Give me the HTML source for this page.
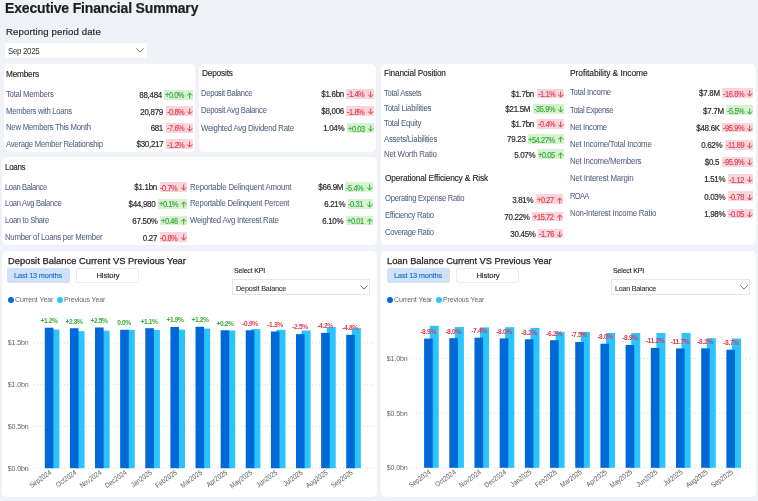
<!DOCTYPE html><html><head><meta charset="utf-8"><style>
html,body{margin:0;padding:0;}
body{width:758px;height:501px;background:#EFF3F8;position:relative;overflow:hidden;font-family:"Liberation Sans", sans-serif;}
.t{position:absolute;white-space:nowrap;}
.r{position:absolute;}
</style></head><body><div style="position:absolute;left:0;top:0;width:758px;height:501px;filter:blur(0.3px)">
<div class="t" style="left:4.60px;top:1.00px;font-size:14.3px;line-height:14.3px;color:#1E1E1E;font-weight:bold;letter-spacing:-0.163px;-webkit-text-stroke:0.2px #1E1E1E;transform:scaleX(0.9790);transform-origin:0 0;">Executive Financial Summary</div>
<div class="t" style="left:6.00px;top:26.94px;font-size:9.4px;line-height:9.4px;color:#2B2B2B;letter-spacing:0.113px;-webkit-text-stroke:0.2px #2B2B2B;transform:scaleX(1.0251);transform-origin:0 0;">Reporting period date</div>
<div class="r" style="left:5.00px;top:42.50px;width:142.00px;height:15.20px;background:#fff;"></div>
<div class="t" style="left:7.70px;top:47.29px;font-size:8.4px;line-height:8.4px;color:#333;letter-spacing:-0.314px;transform:scaleX(0.9388);transform-origin:0 0;">Sep 2025</div>
<svg class="r" style="left:135.8px;top:48.3px" width="8" height="4.6" viewBox="0 0 8 4.6"><path d="M0.4 0.4L4 4.1L7.6 0.4" fill="none" stroke="#555" stroke-width="0.85"/></svg>
<div class="r" style="left:4.00px;top:64.00px;width:191.00px;height:88.00px;background:#fff;border-radius:5px;"></div>
<div class="r" style="left:199.00px;top:64.00px;width:177.00px;height:88.00px;background:#fff;border-radius:5px;"></div>
<div class="r" style="left:2.00px;top:157.00px;width:375.00px;height:87.50px;background:#fff;border-radius:5px;"></div>
<div class="r" style="left:381.00px;top:64.00px;width:375.00px;height:180.50px;background:#fff;border-radius:5px;"></div>
<div class="r" style="left:2.00px;top:251.00px;width:375.00px;height:245.50px;background:#fff;border-radius:5px;"></div>
<div class="r" style="left:381.00px;top:251.00px;width:375.00px;height:245.50px;background:#fff;border-radius:5px;"></div>
<div class="t" style="left:6.00px;top:70.02px;font-size:8.6px;line-height:8.6px;color:#252423;letter-spacing:-0.224px;-webkit-text-stroke:0.14px #252423;transform:scaleX(0.9625);transform-origin:0 0;">Members</div>
<div class="t" style="left:5.80px;top:90.17px;font-size:8.3px;line-height:8.3px;color:#55647F;letter-spacing:-0.285px;-webkit-text-stroke:0.05px #55647F;transform:scaleX(0.9371);transform-origin:0 0;">Total Members</div>
<div class="r" style="left:164.31px;top:89.80px;width:28.89px;height:9.90px;background:#D7F1D3;"></div>
<div class="t" style="left:164.91px;top:92.26px;font-size:8.2px;line-height:8.2px;color:#36A936;letter-spacing:-0.522px;-webkit-text-stroke:0.15px #36A936;transform:scaleX(0.9110);transform-origin:0 0;">+0.0%</div>
<svg class="r" style="left:187px;top:92px" width="6" height="7" viewBox="0 0 6 7"><path d="M2.7 6.5V0.9M0.1 3.6L2.7 0.9L5.3 3.6" fill="none" stroke="#36A936" stroke-width="1.0" stroke-linecap="butt" stroke-linejoin="miter"/></svg>
<div class="t" style="right:596.24px;text-align:right;top:91.09px;font-size:8.4px;line-height:8.4px;color:#2B2B2B;letter-spacing:-0.264px;-webkit-text-stroke:0.2px #2B2B2B;transform:scaleX(0.9487);transform-origin:100% 0;">88,484</div>
<div class="t" style="left:5.80px;top:106.62px;font-size:8.3px;line-height:8.3px;color:#55647F;letter-spacing:-0.316px;-webkit-text-stroke:0.05px #55647F;transform:scaleX(0.9298);transform-origin:0 0;">Members with Loans</div>
<div class="r" style="left:166.02px;top:106.25px;width:27.18px;height:9.90px;background:#F9D6DB;"></div>
<div class="t" style="left:166.62px;top:108.71px;font-size:8.2px;line-height:8.2px;color:#E23A4E;letter-spacing:-0.476px;-webkit-text-stroke:0.15px #E23A4E;transform:scaleX(0.9110);transform-origin:0 0;">-0.8%</div>
<svg class="r" style="left:187px;top:108px" width="6" height="7" viewBox="0 0 6 7"><path d="M2.7 0.5V6.1M0.1 3.4L2.7 6.1L5.3 3.4" fill="none" stroke="#E23A4E" stroke-width="1.0" stroke-linecap="butt" stroke-linejoin="miter"/></svg>
<div class="t" style="right:594.53px;text-align:right;top:107.54px;font-size:8.4px;line-height:8.4px;color:#2B2B2B;letter-spacing:-0.264px;-webkit-text-stroke:0.2px #2B2B2B;transform:scaleX(0.9487);transform-origin:100% 0;">20,879</div>
<div class="t" style="left:5.80px;top:123.07px;font-size:8.3px;line-height:8.3px;color:#55647F;letter-spacing:-0.283px;-webkit-text-stroke:0.05px #55647F;transform:scaleX(0.9386);transform-origin:0 0;">New Members This Month</div>
<div class="r" style="left:166.02px;top:122.70px;width:27.18px;height:9.90px;background:#F9D6DB;"></div>
<div class="t" style="left:166.62px;top:125.16px;font-size:8.2px;line-height:8.2px;color:#E23A4E;letter-spacing:-0.476px;-webkit-text-stroke:0.15px #E23A4E;transform:scaleX(0.9110);transform-origin:0 0;">-7.6%</div>
<svg class="r" style="left:187px;top:125px" width="6" height="7" viewBox="0 0 6 7"><path d="M2.7 0.5V6.1M0.1 3.4L2.7 6.1L5.3 3.4" fill="none" stroke="#E23A4E" stroke-width="1.0" stroke-linecap="butt" stroke-linejoin="miter"/></svg>
<div class="t" style="right:594.62px;text-align:right;top:123.99px;font-size:8.4px;line-height:8.4px;color:#2B2B2B;letter-spacing:-0.360px;-webkit-text-stroke:0.2px #2B2B2B;transform:scaleX(0.9487);transform-origin:100% 0;">681</div>
<div class="t" style="left:5.80px;top:139.52px;font-size:8.3px;line-height:8.3px;color:#55647F;letter-spacing:-0.286px;-webkit-text-stroke:0.05px #55647F;transform:scaleX(0.9332);transform-origin:0 0;">Average Member Relationship</div>
<div class="r" style="left:166.02px;top:139.15px;width:27.18px;height:9.90px;background:#F9D6DB;"></div>
<div class="t" style="left:166.62px;top:141.61px;font-size:8.2px;line-height:8.2px;color:#E23A4E;letter-spacing:-0.476px;-webkit-text-stroke:0.15px #E23A4E;transform:scaleX(0.9110);transform-origin:0 0;">-1.2%</div>
<svg class="r" style="left:187px;top:141px" width="6" height="7" viewBox="0 0 6 7"><path d="M2.7 0.5V6.1M0.1 3.4L2.7 6.1L5.3 3.4" fill="none" stroke="#E23A4E" stroke-width="1.0" stroke-linecap="butt" stroke-linejoin="miter"/></svg>
<div class="t" style="right:594.53px;text-align:right;top:140.44px;font-size:8.4px;line-height:8.4px;color:#2B2B2B;letter-spacing:-0.260px;-webkit-text-stroke:0.2px #2B2B2B;transform:scaleX(0.9487);transform-origin:100% 0;">$30,217</div>
<div class="t" style="left:201.50px;top:69.42px;font-size:8.6px;line-height:8.6px;color:#252423;letter-spacing:-0.186px;-webkit-text-stroke:0.14px #252423;transform:scaleX(0.9610);transform-origin:0 0;">Deposits</div>
<div class="t" style="left:201.30px;top:89.37px;font-size:8.3px;line-height:8.3px;color:#55647F;letter-spacing:-0.332px;-webkit-text-stroke:0.05px #55647F;transform:scaleX(0.9231);transform-origin:0 0;">Deposit Balance</div>
<div class="r" style="left:346.42px;top:89.00px;width:27.18px;height:9.90px;background:#F9D6DB;"></div>
<div class="t" style="left:347.02px;top:91.46px;font-size:8.2px;line-height:8.2px;color:#E23A4E;letter-spacing:-0.476px;-webkit-text-stroke:0.15px #E23A4E;transform:scaleX(0.9110);transform-origin:0 0;">-1.4%</div>
<svg class="r" style="left:368px;top:91px" width="6" height="7" viewBox="0 0 6 7"><path d="M2.7 0.5V6.1M0.1 3.4L2.7 6.1L5.3 3.4" fill="none" stroke="#E23A4E" stroke-width="1.0" stroke-linecap="butt" stroke-linejoin="miter"/></svg>
<div class="t" style="right:414.13px;text-align:right;top:90.29px;font-size:8.4px;line-height:8.4px;color:#2B2B2B;letter-spacing:-0.264px;-webkit-text-stroke:0.2px #2B2B2B;transform:scaleX(0.9487);transform-origin:100% 0;">$1.6bn</div>
<div class="t" style="left:201.30px;top:106.47px;font-size:8.3px;line-height:8.3px;color:#55647F;letter-spacing:-0.301px;-webkit-text-stroke:0.05px #55647F;transform:scaleX(0.9292);transform-origin:0 0;">Deposit Avg Balance</div>
<div class="r" style="left:346.42px;top:106.10px;width:27.18px;height:9.90px;background:#F9D6DB;"></div>
<div class="t" style="left:347.02px;top:108.56px;font-size:8.2px;line-height:8.2px;color:#E23A4E;letter-spacing:-0.476px;-webkit-text-stroke:0.15px #E23A4E;transform:scaleX(0.9110);transform-origin:0 0;">-1.8%</div>
<svg class="r" style="left:368px;top:108px" width="6" height="7" viewBox="0 0 6 7"><path d="M2.7 0.5V6.1M0.1 3.4L2.7 6.1L5.3 3.4" fill="none" stroke="#E23A4E" stroke-width="1.0" stroke-linecap="butt" stroke-linejoin="miter"/></svg>
<div class="t" style="right:414.13px;text-align:right;top:107.39px;font-size:8.4px;line-height:8.4px;color:#2B2B2B;letter-spacing:-0.264px;-webkit-text-stroke:0.2px #2B2B2B;transform:scaleX(0.9487);transform-origin:100% 0;">$8,006</div>
<div class="t" style="left:201.30px;top:123.57px;font-size:8.3px;line-height:8.3px;color:#55647F;letter-spacing:-0.253px;-webkit-text-stroke:0.05px #55647F;transform:scaleX(0.9400);transform-origin:0 0;">Weighted Avg Dividend Rate</div>
<div class="r" style="left:346.98px;top:123.20px;width:26.62px;height:9.90px;background:#D7F1D3;"></div>
<div class="t" style="left:347.58px;top:125.66px;font-size:8.2px;line-height:8.2px;color:#36A936;letter-spacing:-0.461px;-webkit-text-stroke:0.15px #36A936;transform:scaleX(0.9110);transform-origin:0 0;">+0.03</div>
<svg class="r" style="left:368px;top:125px" width="6" height="7" viewBox="0 0 6 7"><path d="M2.7 0.5V6.1M0.1 3.4L2.7 6.1L5.3 3.4" fill="none" stroke="#36A936" stroke-width="1.0" stroke-linecap="butt" stroke-linejoin="miter"/></svg>
<div class="t" style="right:413.61px;text-align:right;top:124.49px;font-size:8.4px;line-height:8.4px;color:#2B2B2B;letter-spacing:-0.306px;-webkit-text-stroke:0.2px #2B2B2B;transform:scaleX(0.9487);transform-origin:100% 0;">1.04%</div>
<div class="t" style="left:5.00px;top:163.42px;font-size:8.6px;line-height:8.6px;color:#252423;letter-spacing:-0.365px;-webkit-text-stroke:0.14px #252423;transform:scaleX(0.9376);transform-origin:0 0;">Loans</div>
<div class="t" style="left:5.00px;top:182.57px;font-size:8.3px;line-height:8.3px;color:#55647F;letter-spacing:-0.407px;-webkit-text-stroke:0.05px #55647F;transform:scaleX(0.9117);transform-origin:0 0;">Loan Balance</div>
<div class="r" style="left:159.62px;top:182.20px;width:27.18px;height:9.90px;background:#F9D6DB;"></div>
<div class="t" style="left:160.22px;top:184.66px;font-size:8.2px;line-height:8.2px;color:#E23A4E;letter-spacing:-0.476px;-webkit-text-stroke:0.15px #E23A4E;transform:scaleX(0.9110);transform-origin:0 0;">-0.7%</div>
<svg class="r" style="left:181px;top:184px" width="6" height="7" viewBox="0 0 6 7"><path d="M2.7 0.5V6.1M0.1 3.4L2.7 6.1L5.3 3.4" fill="none" stroke="#E23A4E" stroke-width="1.0" stroke-linecap="butt" stroke-linejoin="miter"/></svg>
<div class="t" style="right:600.93px;text-align:right;top:183.49px;font-size:8.4px;line-height:8.4px;color:#2B2B2B;letter-spacing:-0.264px;-webkit-text-stroke:0.2px #2B2B2B;transform:scaleX(0.9487);transform-origin:100% 0;">$1.1bn</div>
<div class="t" style="left:5.00px;top:199.27px;font-size:8.3px;line-height:8.3px;color:#55647F;letter-spacing:-0.349px;-webkit-text-stroke:0.05px #55647F;transform:scaleX(0.9215);transform-origin:0 0;">Loan Avg Balance</div>
<div class="r" style="left:157.91px;top:198.90px;width:28.89px;height:9.90px;background:#D7F1D3;"></div>
<div class="t" style="left:158.51px;top:201.36px;font-size:8.2px;line-height:8.2px;color:#36A936;letter-spacing:-0.522px;-webkit-text-stroke:0.15px #36A936;transform:scaleX(0.9110);transform-origin:0 0;">+0.1%</div>
<svg class="r" style="left:181px;top:201px" width="6" height="7" viewBox="0 0 6 7"><path d="M2.7 6.5V0.9M0.1 3.6L2.7 0.9L5.3 3.6" fill="none" stroke="#36A936" stroke-width="1.0" stroke-linecap="butt" stroke-linejoin="miter"/></svg>
<div class="t" style="right:602.63px;text-align:right;top:200.19px;font-size:8.4px;line-height:8.4px;color:#2B2B2B;letter-spacing:-0.260px;-webkit-text-stroke:0.2px #2B2B2B;transform:scaleX(0.9487);transform-origin:100% 0;">$44,980</div>
<div class="t" style="left:5.00px;top:215.97px;font-size:8.3px;line-height:8.3px;color:#55647F;letter-spacing:-0.340px;-webkit-text-stroke:0.05px #55647F;transform:scaleX(0.9217);transform-origin:0 0;">Loan to Share</div>
<div class="r" style="left:160.18px;top:215.60px;width:26.62px;height:9.90px;background:#D7F1D3;"></div>
<div class="t" style="left:160.78px;top:218.06px;font-size:8.2px;line-height:8.2px;color:#36A936;letter-spacing:-0.461px;-webkit-text-stroke:0.15px #36A936;transform:scaleX(0.9110);transform-origin:0 0;">+0.46</div>
<svg class="r" style="left:181px;top:218px" width="6" height="7" viewBox="0 0 6 7"><path d="M2.7 6.5V0.9M0.1 3.6L2.7 0.9L5.3 3.6" fill="none" stroke="#36A936" stroke-width="1.0" stroke-linecap="butt" stroke-linejoin="miter"/></svg>
<div class="t" style="right:600.40px;text-align:right;top:216.89px;font-size:8.4px;line-height:8.4px;color:#2B2B2B;letter-spacing:-0.292px;-webkit-text-stroke:0.2px #2B2B2B;transform:scaleX(0.9487);transform-origin:100% 0;">67.50%</div>
<div class="t" style="left:5.00px;top:232.67px;font-size:8.3px;line-height:8.3px;color:#55647F;letter-spacing:-0.271px;-webkit-text-stroke:0.05px #55647F;transform:scaleX(0.9389);transform-origin:0 0;">Number of Loans per Member</div>
<div class="r" style="left:159.62px;top:232.30px;width:27.18px;height:9.90px;background:#F9D6DB;"></div>
<div class="t" style="left:160.22px;top:234.76px;font-size:8.2px;line-height:8.2px;color:#E23A4E;letter-spacing:-0.476px;-webkit-text-stroke:0.15px #E23A4E;transform:scaleX(0.9110);transform-origin:0 0;">-0.8%</div>
<svg class="r" style="left:181px;top:234px" width="6" height="7" viewBox="0 0 6 7"><path d="M2.7 0.5V6.1M0.1 3.4L2.7 6.1L5.3 3.4" fill="none" stroke="#E23A4E" stroke-width="1.0" stroke-linecap="butt" stroke-linejoin="miter"/></svg>
<div class="t" style="right:600.94px;text-align:right;top:233.59px;font-size:8.4px;line-height:8.4px;color:#2B2B2B;letter-spacing:-0.280px;-webkit-text-stroke:0.2px #2B2B2B;transform:scaleX(0.9487);transform-origin:100% 0;">0.27</div>
<div class="t" style="left:190.00px;top:182.57px;font-size:8.3px;line-height:8.3px;color:#55647F;letter-spacing:-0.218px;-webkit-text-stroke:0.05px #55647F;transform:scaleX(0.9480);transform-origin:0 0;">Reportable Delinquent Amount</div>
<div class="r" style="left:345.42px;top:182.20px;width:27.18px;height:9.90px;background:#D7F1D3;"></div>
<div class="t" style="left:346.02px;top:184.66px;font-size:8.2px;line-height:8.2px;color:#36A936;letter-spacing:-0.476px;-webkit-text-stroke:0.15px #36A936;transform:scaleX(0.9110);transform-origin:0 0;">-5.4%</div>
<svg class="r" style="left:367px;top:184px" width="6" height="7" viewBox="0 0 6 7"><path d="M2.7 0.5V6.1M0.1 3.4L2.7 6.1L5.3 3.4" fill="none" stroke="#36A936" stroke-width="1.0" stroke-linecap="butt" stroke-linejoin="miter"/></svg>
<div class="t" style="right:415.15px;text-align:right;top:183.49px;font-size:8.4px;line-height:8.4px;color:#2B2B2B;letter-spacing:-0.288px;-webkit-text-stroke:0.2px #2B2B2B;transform:scaleX(0.9487);transform-origin:100% 0;">$66.9M</div>
<div class="t" style="left:190.00px;top:199.27px;font-size:8.3px;line-height:8.3px;color:#55647F;letter-spacing:-0.258px;-webkit-text-stroke:0.05px #55647F;transform:scaleX(0.9363);transform-origin:0 0;">Reportable Delinquent Percent</div>
<div class="r" style="left:347.69px;top:198.90px;width:24.91px;height:9.90px;background:#D7F1D3;"></div>
<div class="t" style="left:348.29px;top:201.36px;font-size:8.2px;line-height:8.2px;color:#36A936;letter-spacing:-0.416px;-webkit-text-stroke:0.15px #36A936;transform:scaleX(0.9110);transform-origin:0 0;">-0.31</div>
<svg class="r" style="left:367px;top:201px" width="6" height="7" viewBox="0 0 6 7"><path d="M2.7 0.5V6.1M0.1 3.4L2.7 6.1L5.3 3.4" fill="none" stroke="#36A936" stroke-width="1.0" stroke-linecap="butt" stroke-linejoin="miter"/></svg>
<div class="t" style="right:412.90px;text-align:right;top:200.19px;font-size:8.4px;line-height:8.4px;color:#2B2B2B;letter-spacing:-0.306px;-webkit-text-stroke:0.2px #2B2B2B;transform:scaleX(0.9487);transform-origin:100% 0;">6.21%</div>
<div class="t" style="left:190.00px;top:215.97px;font-size:8.3px;line-height:8.3px;color:#55647F;letter-spacing:-0.244px;-webkit-text-stroke:0.05px #55647F;transform:scaleX(0.9394);transform-origin:0 0;">Weighted Avg Interest Rate</div>
<div class="r" style="left:345.98px;top:215.60px;width:26.62px;height:9.90px;background:#D7F1D3;"></div>
<div class="t" style="left:346.58px;top:218.06px;font-size:8.2px;line-height:8.2px;color:#36A936;letter-spacing:-0.461px;-webkit-text-stroke:0.15px #36A936;transform:scaleX(0.9110);transform-origin:0 0;">+0.01</div>
<svg class="r" style="left:367px;top:218px" width="6" height="7" viewBox="0 0 6 7"><path d="M2.7 6.5V0.9M0.1 3.6L2.7 0.9L5.3 3.6" fill="none" stroke="#36A936" stroke-width="1.0" stroke-linecap="butt" stroke-linejoin="miter"/></svg>
<div class="t" style="right:414.61px;text-align:right;top:216.89px;font-size:8.4px;line-height:8.4px;color:#2B2B2B;letter-spacing:-0.306px;-webkit-text-stroke:0.2px #2B2B2B;transform:scaleX(0.9487);transform-origin:100% 0;">6.10%</div>
<div class="t" style="left:384.20px;top:69.42px;font-size:8.6px;line-height:8.6px;color:#252423;letter-spacing:-0.162px;-webkit-text-stroke:0.14px #252423;transform:scaleX(0.9591);transform-origin:0 0;">Financial Position</div>
<div class="t" style="left:384.20px;top:88.97px;font-size:8.3px;line-height:8.3px;color:#55647F;letter-spacing:-0.312px;-webkit-text-stroke:0.05px #55647F;transform:scaleX(0.9226);transform-origin:0 0;">Total Assets</div>
<div class="r" style="left:537.02px;top:88.60px;width:27.18px;height:9.90px;background:#F9D6DB;"></div>
<div class="t" style="left:537.62px;top:91.06px;font-size:8.2px;line-height:8.2px;color:#E23A4E;letter-spacing:-0.476px;-webkit-text-stroke:0.15px #E23A4E;transform:scaleX(0.9110);transform-origin:0 0;">-1.1%</div>
<svg class="r" style="left:558px;top:91px" width="6" height="7" viewBox="0 0 6 7"><path d="M2.7 0.5V6.1M0.1 3.4L2.7 6.1L5.3 3.4" fill="none" stroke="#E23A4E" stroke-width="1.0" stroke-linecap="butt" stroke-linejoin="miter"/></svg>
<div class="t" style="right:223.53px;text-align:right;top:89.89px;font-size:8.4px;line-height:8.4px;color:#2B2B2B;letter-spacing:-0.264px;-webkit-text-stroke:0.2px #2B2B2B;transform:scaleX(0.9487);transform-origin:100% 0;">$1.7bn</div>
<div class="t" style="left:384.20px;top:104.17px;font-size:8.3px;line-height:8.3px;color:#55647F;letter-spacing:-0.209px;-webkit-text-stroke:0.05px #55647F;transform:scaleX(0.9381);transform-origin:0 0;">Total Liabilities</div>
<div class="r" style="left:533.24px;top:103.80px;width:30.96px;height:9.90px;background:#D7F1D3;"></div>
<div class="t" style="left:533.84px;top:106.26px;font-size:8.2px;line-height:8.2px;color:#36A936;letter-spacing:-0.462px;-webkit-text-stroke:0.15px #36A936;transform:scaleX(0.9110);transform-origin:0 0;">-35.9%</div>
<svg class="r" style="left:558px;top:106px" width="6" height="7" viewBox="0 0 6 7"><path d="M2.7 0.5V6.1M0.1 3.4L2.7 6.1L5.3 3.4" fill="none" stroke="#36A936" stroke-width="1.0" stroke-linecap="butt" stroke-linejoin="miter"/></svg>
<div class="t" style="right:227.34px;text-align:right;top:105.09px;font-size:8.4px;line-height:8.4px;color:#2B2B2B;letter-spacing:-0.288px;-webkit-text-stroke:0.2px #2B2B2B;transform:scaleX(0.9487);transform-origin:100% 0;">$21.5M</div>
<div class="t" style="left:384.20px;top:119.37px;font-size:8.3px;line-height:8.3px;color:#55647F;letter-spacing:-0.254px;-webkit-text-stroke:0.05px #55647F;transform:scaleX(0.9349);transform-origin:0 0;">Total Equity</div>
<div class="r" style="left:537.02px;top:119.00px;width:27.18px;height:9.90px;background:#F9D6DB;"></div>
<div class="t" style="left:537.62px;top:121.46px;font-size:8.2px;line-height:8.2px;color:#E23A4E;letter-spacing:-0.476px;-webkit-text-stroke:0.15px #E23A4E;transform:scaleX(0.9110);transform-origin:0 0;">-0.4%</div>
<svg class="r" style="left:558px;top:121px" width="6" height="7" viewBox="0 0 6 7"><path d="M2.7 0.5V6.1M0.1 3.4L2.7 6.1L5.3 3.4" fill="none" stroke="#E23A4E" stroke-width="1.0" stroke-linecap="butt" stroke-linejoin="miter"/></svg>
<div class="t" style="right:223.53px;text-align:right;top:120.29px;font-size:8.4px;line-height:8.4px;color:#2B2B2B;letter-spacing:-0.264px;-webkit-text-stroke:0.2px #2B2B2B;transform:scaleX(0.9487);transform-origin:100% 0;">$1.7bn</div>
<div class="t" style="left:384.20px;top:134.57px;font-size:8.3px;line-height:8.3px;color:#55647F;letter-spacing:-0.245px;-webkit-text-stroke:0.05px #55647F;transform:scaleX(0.9321);transform-origin:0 0;">Assets/Liabilities</div>
<div class="r" style="left:527.74px;top:134.20px;width:36.46px;height:9.90px;background:#D7F1D3;"></div>
<div class="t" style="left:528.34px;top:136.66px;font-size:8.2px;line-height:8.2px;color:#36A936;letter-spacing:-0.483px;-webkit-text-stroke:0.15px #36A936;transform:scaleX(0.9110);transform-origin:0 0;">+54.27%</div>
<svg class="r" style="left:558px;top:136px" width="6" height="7" viewBox="0 0 6 7"><path d="M2.7 6.5V0.9M0.1 3.6L2.7 0.9L5.3 3.6" fill="none" stroke="#36A936" stroke-width="1.0" stroke-linecap="butt" stroke-linejoin="miter"/></svg>
<div class="t" style="right:232.81px;text-align:right;top:135.49px;font-size:8.4px;line-height:8.4px;color:#2B2B2B;letter-spacing:-0.270px;-webkit-text-stroke:0.2px #2B2B2B;transform:scaleX(0.9487);transform-origin:100% 0;">79.23</div>
<div class="t" style="left:384.20px;top:149.77px;font-size:8.3px;line-height:8.3px;color:#55647F;letter-spacing:-0.223px;-webkit-text-stroke:0.05px #55647F;transform:scaleX(0.9469);transform-origin:0 0;">Net Worth Ratio</div>
<div class="r" style="left:537.58px;top:149.40px;width:26.62px;height:9.90px;background:#D7F1D3;"></div>
<div class="t" style="left:538.18px;top:151.86px;font-size:8.2px;line-height:8.2px;color:#36A936;letter-spacing:-0.461px;-webkit-text-stroke:0.15px #36A936;transform:scaleX(0.9110);transform-origin:0 0;">+0.05</div>
<svg class="r" style="left:558px;top:152px" width="6" height="7" viewBox="0 0 6 7"><path d="M2.7 6.5V0.9M0.1 3.6L2.7 0.9L5.3 3.6" fill="none" stroke="#36A936" stroke-width="1.0" stroke-linecap="butt" stroke-linejoin="miter"/></svg>
<div class="t" style="right:223.01px;text-align:right;top:150.69px;font-size:8.4px;line-height:8.4px;color:#2B2B2B;letter-spacing:-0.306px;-webkit-text-stroke:0.2px #2B2B2B;transform:scaleX(0.9487);transform-origin:100% 0;">5.07%</div>
<div class="t" style="left:384.80px;top:174.42px;font-size:8.6px;line-height:8.6px;color:#252423;letter-spacing:-0.137px;-webkit-text-stroke:0.14px #252423;transform:scaleX(0.9654);transform-origin:0 0;">Operational Efficiency &amp; Risk</div>
<div class="t" style="left:384.80px;top:193.77px;font-size:8.3px;line-height:8.3px;color:#55647F;letter-spacing:-0.310px;-webkit-text-stroke:0.05px #55647F;transform:scaleX(0.9265);transform-origin:0 0;">Operating Expense Ratio</div>
<div class="r" style="left:536.28px;top:194.40px;width:26.62px;height:9.90px;background:#F9D6DB;"></div>
<div class="t" style="left:536.88px;top:196.86px;font-size:8.2px;line-height:8.2px;color:#E23A4E;letter-spacing:-0.461px;-webkit-text-stroke:0.15px #E23A4E;transform:scaleX(0.9110);transform-origin:0 0;">+0.27</div>
<svg class="r" style="left:557px;top:197px" width="6" height="7" viewBox="0 0 6 7"><path d="M2.7 6.5V0.9M0.1 3.6L2.7 0.9L5.3 3.6" fill="none" stroke="#E23A4E" stroke-width="1.0" stroke-linecap="butt" stroke-linejoin="miter"/></svg>
<div class="t" style="right:224.31px;text-align:right;top:195.69px;font-size:8.4px;line-height:8.4px;color:#2B2B2B;letter-spacing:-0.306px;-webkit-text-stroke:0.2px #2B2B2B;transform:scaleX(0.9487);transform-origin:100% 0;">3.81%</div>
<div class="t" style="left:384.80px;top:210.87px;font-size:8.3px;line-height:8.3px;color:#55647F;letter-spacing:-0.279px;-webkit-text-stroke:0.05px #55647F;transform:scaleX(0.9268);transform-origin:0 0;">Efficiency Ratio</div>
<div class="r" style="left:532.49px;top:211.50px;width:30.41px;height:9.90px;background:#F9D6DB;"></div>
<div class="t" style="left:533.09px;top:213.96px;font-size:8.2px;line-height:8.2px;color:#E23A4E;letter-spacing:-0.450px;-webkit-text-stroke:0.15px #E23A4E;transform:scaleX(0.9110);transform-origin:0 0;">+15.72</div>
<svg class="r" style="left:557px;top:214px" width="6" height="7" viewBox="0 0 6 7"><path d="M2.7 6.5V0.9M0.1 3.6L2.7 0.9L5.3 3.6" fill="none" stroke="#E23A4E" stroke-width="1.0" stroke-linecap="butt" stroke-linejoin="miter"/></svg>
<div class="t" style="right:228.08px;text-align:right;top:212.79px;font-size:8.4px;line-height:8.4px;color:#2B2B2B;letter-spacing:-0.292px;-webkit-text-stroke:0.2px #2B2B2B;transform:scaleX(0.9487);transform-origin:100% 0;">70.22%</div>
<div class="t" style="left:384.80px;top:227.97px;font-size:8.3px;line-height:8.3px;color:#55647F;letter-spacing:-0.347px;-webkit-text-stroke:0.05px #55647F;transform:scaleX(0.9218);transform-origin:0 0;">Coverage Ratio</div>
<div class="r" style="left:537.99px;top:228.60px;width:24.91px;height:9.90px;background:#F9D6DB;"></div>
<div class="t" style="left:538.59px;top:231.06px;font-size:8.2px;line-height:8.2px;color:#E23A4E;letter-spacing:-0.416px;-webkit-text-stroke:0.15px #E23A4E;transform:scaleX(0.9110);transform-origin:0 0;">-1.76</div>
<svg class="r" style="left:557px;top:231px" width="6" height="7" viewBox="0 0 6 7"><path d="M2.7 0.5V6.1M0.1 3.4L2.7 6.1L5.3 3.4" fill="none" stroke="#E23A4E" stroke-width="1.0" stroke-linecap="butt" stroke-linejoin="miter"/></svg>
<div class="t" style="right:222.59px;text-align:right;top:229.89px;font-size:8.4px;line-height:8.4px;color:#2B2B2B;letter-spacing:-0.292px;-webkit-text-stroke:0.2px #2B2B2B;transform:scaleX(0.9487);transform-origin:100% 0;">30.45%</div>
<div class="t" style="left:570.40px;top:69.42px;font-size:8.6px;line-height:8.6px;color:#252423;letter-spacing:-0.072px;-webkit-text-stroke:0.14px #252423;transform:scaleX(0.9814);transform-origin:0 0;">Profitability &amp; Income</div>
<div class="t" style="left:570.40px;top:88.47px;font-size:8.3px;line-height:8.3px;color:#55647F;letter-spacing:-0.275px;-webkit-text-stroke:0.05px #55647F;transform:scaleX(0.9357);transform-origin:0 0;">Total Income</div>
<div class="r" style="left:722.24px;top:88.10px;width:30.96px;height:9.90px;background:#F9D6DB;"></div>
<div class="t" style="left:722.84px;top:90.56px;font-size:8.2px;line-height:8.2px;color:#E23A4E;letter-spacing:-0.462px;-webkit-text-stroke:0.15px #E23A4E;transform:scaleX(0.9110);transform-origin:0 0;">-16.8%</div>
<svg class="r" style="left:747px;top:90px" width="6" height="7" viewBox="0 0 6 7"><path d="M2.7 0.5V6.1M0.1 3.4L2.7 6.1L5.3 3.4" fill="none" stroke="#E23A4E" stroke-width="1.0" stroke-linecap="butt" stroke-linejoin="miter"/></svg>
<div class="t" style="right:38.35px;text-align:right;top:89.39px;font-size:8.4px;line-height:8.4px;color:#2B2B2B;letter-spacing:-0.300px;-webkit-text-stroke:0.2px #2B2B2B;transform:scaleX(0.9487);transform-origin:100% 0;">$7.8M</div>
<div class="t" style="left:570.40px;top:105.67px;font-size:8.3px;line-height:8.3px;color:#55647F;letter-spacing:-0.376px;-webkit-text-stroke:0.05px #55647F;transform:scaleX(0.9134);transform-origin:0 0;">Total Expense</div>
<div class="r" style="left:726.02px;top:105.30px;width:27.18px;height:9.90px;background:#D7F1D3;"></div>
<div class="t" style="left:726.62px;top:107.76px;font-size:8.2px;line-height:8.2px;color:#36A936;letter-spacing:-0.476px;-webkit-text-stroke:0.15px #36A936;transform:scaleX(0.9110);transform-origin:0 0;">-5.5%</div>
<svg class="r" style="left:747px;top:108px" width="6" height="7" viewBox="0 0 6 7"><path d="M2.7 0.5V6.1M0.1 3.4L2.7 6.1L5.3 3.4" fill="none" stroke="#36A936" stroke-width="1.0" stroke-linecap="butt" stroke-linejoin="miter"/></svg>
<div class="t" style="right:34.56px;text-align:right;top:106.59px;font-size:8.4px;line-height:8.4px;color:#2B2B2B;letter-spacing:-0.300px;-webkit-text-stroke:0.2px #2B2B2B;transform:scaleX(0.9487);transform-origin:100% 0;">$7.7M</div>
<div class="t" style="left:570.40px;top:122.87px;font-size:8.3px;line-height:8.3px;color:#55647F;letter-spacing:-0.301px;-webkit-text-stroke:0.05px #55647F;transform:scaleX(0.9362);transform-origin:0 0;">Net Income</div>
<div class="r" style="left:722.24px;top:122.50px;width:30.96px;height:9.90px;background:#F9D6DB;"></div>
<div class="t" style="left:722.84px;top:124.96px;font-size:8.2px;line-height:8.2px;color:#E23A4E;letter-spacing:-0.462px;-webkit-text-stroke:0.15px #E23A4E;transform:scaleX(0.9110);transform-origin:0 0;">-95.9%</div>
<svg class="r" style="left:747px;top:125px" width="6" height="7" viewBox="0 0 6 7"><path d="M2.7 0.5V6.1M0.1 3.4L2.7 6.1L5.3 3.4" fill="none" stroke="#E23A4E" stroke-width="1.0" stroke-linecap="butt" stroke-linejoin="miter"/></svg>
<div class="t" style="right:38.32px;text-align:right;top:123.79px;font-size:8.4px;line-height:8.4px;color:#2B2B2B;letter-spacing:-0.273px;-webkit-text-stroke:0.2px #2B2B2B;transform:scaleX(0.9487);transform-origin:100% 0;">$48.6K</div>
<div class="t" style="left:570.40px;top:140.07px;font-size:8.3px;line-height:8.3px;color:#55647F;letter-spacing:-0.234px;-webkit-text-stroke:0.05px #55647F;transform:scaleX(0.9439);transform-origin:0 0;">Net Income/Total Income</div>
<div class="r" style="left:725.01px;top:139.70px;width:28.19px;height:9.90px;background:#F9D6DB;"></div>
<div class="t" style="left:725.61px;top:142.16px;font-size:8.2px;line-height:8.2px;color:#E23A4E;letter-spacing:-0.403px;-webkit-text-stroke:0.15px #E23A4E;transform:scaleX(0.9110);transform-origin:0 0;">-11.89</div>
<svg class="r" style="left:747px;top:142px" width="6" height="7" viewBox="0 0 6 7"><path d="M2.7 0.5V6.1M0.1 3.4L2.7 6.1L5.3 3.4" fill="none" stroke="#E23A4E" stroke-width="1.0" stroke-linecap="butt" stroke-linejoin="miter"/></svg>
<div class="t" style="right:35.58px;text-align:right;top:140.99px;font-size:8.4px;line-height:8.4px;color:#2B2B2B;letter-spacing:-0.306px;-webkit-text-stroke:0.2px #2B2B2B;transform:scaleX(0.9487);transform-origin:100% 0;">0.62%</div>
<div class="t" style="left:570.40px;top:157.27px;font-size:8.3px;line-height:8.3px;color:#55647F;letter-spacing:-0.236px;-webkit-text-stroke:0.05px #55647F;transform:scaleX(0.9493);transform-origin:0 0;">Net Income/Members</div>
<div class="r" style="left:722.24px;top:156.90px;width:30.96px;height:9.90px;background:#F9D6DB;"></div>
<div class="t" style="left:722.84px;top:159.36px;font-size:8.2px;line-height:8.2px;color:#E23A4E;letter-spacing:-0.462px;-webkit-text-stroke:0.15px #E23A4E;transform:scaleX(0.9110);transform-origin:0 0;">-95.9%</div>
<svg class="r" style="left:747px;top:159px" width="6" height="7" viewBox="0 0 6 7"><path d="M2.7 0.5V6.1M0.1 3.4L2.7 6.1L5.3 3.4" fill="none" stroke="#E23A4E" stroke-width="1.0" stroke-linecap="butt" stroke-linejoin="miter"/></svg>
<div class="t" style="right:38.33px;text-align:right;top:158.19px;font-size:8.4px;line-height:8.4px;color:#2B2B2B;letter-spacing:-0.280px;-webkit-text-stroke:0.2px #2B2B2B;transform:scaleX(0.9487);transform-origin:100% 0;">$0.5</div>
<div class="t" style="left:570.40px;top:174.47px;font-size:8.3px;line-height:8.3px;color:#55647F;letter-spacing:-0.199px;-webkit-text-stroke:0.05px #55647F;transform:scaleX(0.9493);transform-origin:0 0;">Net Interest Margin</div>
<div class="r" style="left:728.29px;top:174.10px;width:24.91px;height:9.90px;background:#F9D6DB;"></div>
<div class="t" style="left:728.89px;top:176.56px;font-size:8.2px;line-height:8.2px;color:#E23A4E;letter-spacing:-0.416px;-webkit-text-stroke:0.15px #E23A4E;transform:scaleX(0.9110);transform-origin:0 0;">-1.12</div>
<svg class="r" style="left:747px;top:176px" width="6" height="7" viewBox="0 0 6 7"><path d="M2.7 0.5V6.1M0.1 3.4L2.7 6.1L5.3 3.4" fill="none" stroke="#E23A4E" stroke-width="1.0" stroke-linecap="butt" stroke-linejoin="miter"/></svg>
<div class="t" style="right:32.30px;text-align:right;top:175.39px;font-size:8.4px;line-height:8.4px;color:#2B2B2B;letter-spacing:-0.306px;-webkit-text-stroke:0.2px #2B2B2B;transform:scaleX(0.9487);transform-origin:100% 0;">1.51%</div>
<div class="t" style="left:570.40px;top:191.67px;font-size:8.3px;line-height:8.3px;color:#55647F;letter-spacing:-0.738px;-webkit-text-stroke:0.05px #55647F;transform:scaleX(0.9058);transform-origin:0 0;">ROAA</div>
<div class="r" style="left:728.29px;top:191.30px;width:24.91px;height:9.90px;background:#F9D6DB;"></div>
<div class="t" style="left:728.89px;top:193.76px;font-size:8.2px;line-height:8.2px;color:#E23A4E;letter-spacing:-0.416px;-webkit-text-stroke:0.15px #E23A4E;transform:scaleX(0.9110);transform-origin:0 0;">-0.78</div>
<svg class="r" style="left:747px;top:194px" width="6" height="7" viewBox="0 0 6 7"><path d="M2.7 0.5V6.1M0.1 3.4L2.7 6.1L5.3 3.4" fill="none" stroke="#E23A4E" stroke-width="1.0" stroke-linecap="butt" stroke-linejoin="miter"/></svg>
<div class="t" style="right:32.30px;text-align:right;top:192.59px;font-size:8.4px;line-height:8.4px;color:#2B2B2B;letter-spacing:-0.306px;-webkit-text-stroke:0.2px #2B2B2B;transform:scaleX(0.9487);transform-origin:100% 0;">0.03%</div>
<div class="t" style="left:570.40px;top:208.87px;font-size:8.3px;line-height:8.3px;color:#55647F;letter-spacing:-0.227px;-webkit-text-stroke:0.05px #55647F;transform:scaleX(0.9438);transform-origin:0 0;">Non-Interest Income Ratio</div>
<div class="r" style="left:728.29px;top:208.50px;width:24.91px;height:9.90px;background:#F9D6DB;"></div>
<div class="t" style="left:728.89px;top:210.96px;font-size:8.2px;line-height:8.2px;color:#E23A4E;letter-spacing:-0.416px;-webkit-text-stroke:0.15px #E23A4E;transform:scaleX(0.9110);transform-origin:0 0;">-0.05</div>
<svg class="r" style="left:747px;top:211px" width="6" height="7" viewBox="0 0 6 7"><path d="M2.7 0.5V6.1M0.1 3.4L2.7 6.1L5.3 3.4" fill="none" stroke="#E23A4E" stroke-width="1.0" stroke-linecap="butt" stroke-linejoin="miter"/></svg>
<div class="t" style="right:32.30px;text-align:right;top:209.79px;font-size:8.4px;line-height:8.4px;color:#2B2B2B;letter-spacing:-0.306px;-webkit-text-stroke:0.2px #2B2B2B;transform:scaleX(0.9487);transform-origin:100% 0;">1.98%</div>
<div class="t" style="left:7.50px;top:257.03px;font-size:9.3px;line-height:9.3px;color:#252423;letter-spacing:0.022px;-webkit-text-stroke:0.25px #252423;transform:scaleX(1.0049);transform-origin:0 0;">Deposit Balance Current VS Previous Year</div>
<div class="r" style="left:7.20px;top:268.20px;width:62.70px;height:14.50px;background:#CFE2F8;border-radius:2px;"></div>
<div class="t" style="left:-111.60px;width:300px;text-align:center;top:272.30px;font-size:7.8px;line-height:7.8px;color:#1F6AD8;letter-spacing:-0.210px;-webkit-text-stroke:0.15px #1F6AD8;transform:scaleX(0.9487);transform-origin:50% 0;">Last 13 months</div>
<div class="r" style="left:76.40px;top:268.20px;width:63.10px;height:14.50px;background:#fff;border:1px solid #E8EBEF;box-sizing:border-box;border-radius:2px;"></div>
<div class="t" style="left:-42.04px;width:300px;text-align:center;top:272.30px;font-size:7.8px;line-height:7.8px;color:#252423;letter-spacing:-0.082px;-webkit-text-stroke:0.15px #252423;transform:scaleX(0.9798);transform-origin:50% 0;">History</div>
<div class="t" style="left:233.90px;top:267.34px;font-size:7.4px;line-height:7.4px;color:#252423;letter-spacing:-0.185px;-webkit-text-stroke:0.12px #252423;transform:scaleX(0.9518);transform-origin:0 0;">Select KPI</div>
<div class="r" style="left:232.10px;top:279.30px;width:137.60px;height:15.70px;background:#fff;border:1px solid #E3E6EB;box-sizing:border-box;"></div>
<div class="t" style="left:235.60px;top:284.57px;font-size:7.6px;line-height:7.6px;color:#252423;letter-spacing:-0.181px;-webkit-text-stroke:0.05px #252423;transform:scaleX(0.9543);transform-origin:0 0;">Deposit Balance</div>
<svg class="r" style="left:360.00px;top:285.4px" width="8" height="4.6" viewBox="0 0 8 4.6"><path d="M0.4 0.4L4 4.1L7.6 0.4" fill="none" stroke="#555" stroke-width="0.85"/></svg>
<div class="r" style="left:7.80px;top:297.3px;width:5.9px;height:5.9px;border-radius:50%;background:#0069D7"></div>
<div class="t" style="left:15.20px;top:296.31px;font-size:7.2px;line-height:7.2px;color:#666;letter-spacing:-0.093px;transform:scaleX(0.9746);transform-origin:0 0;">Current Year</div>
<div class="r" style="left:56.80px;top:297.3px;width:5.9px;height:5.9px;border-radius:50%;background:#2AC4FF"></div>
<div class="t" style="left:64.00px;top:296.31px;font-size:7.2px;line-height:7.2px;color:#666;letter-spacing:-0.133px;transform:scaleX(0.9641);transform-origin:0 0;">Previous Year</div>
<svg class="r" style="left:0;top:0" width="758" height="501" viewBox="0 0 758 501"><line x1="33.50" y1="343.00" x2="374.00" y2="343.00" stroke="#D0D0D0" stroke-width="0.9" stroke-dasharray="1 2.4"/><line x1="33.50" y1="384.73" x2="374.00" y2="384.73" stroke="#D0D0D0" stroke-width="0.9" stroke-dasharray="1 2.4"/><line x1="33.50" y1="426.46" x2="374.00" y2="426.46" stroke="#D0D0D0" stroke-width="0.9" stroke-dasharray="1 2.4"/><line x1="33.50" y1="468.20" x2="374.00" y2="468.20" stroke="#D0D0D0" stroke-width="0.9" stroke-dasharray="1 2.4"/><rect x="50.40" y="329.60" width="9.00" height="138.60" fill="#2AC4FF"/><rect x="44.80" y="327.70" width="8.60" height="140.50" fill="#0069D7"/><text transform="translate(52.00,473.60) rotate(-36) scale(0.86,1)" text-anchor="end" font-family="Liberation Sans" font-size="7.3" fill="#5E5E5E">Sep2024</text><rect x="75.52" y="331.20" width="9.00" height="137.00" fill="#2AC4FF"/><rect x="69.92" y="328.20" width="8.60" height="140.00" fill="#0069D7"/><text transform="translate(77.12,473.60) rotate(-36) scale(0.86,1)" text-anchor="end" font-family="Liberation Sans" font-size="7.3" fill="#5E5E5E">Oct2024</text><rect x="100.64" y="330.70" width="9.00" height="137.50" fill="#2AC4FF"/><rect x="95.04" y="327.50" width="8.60" height="140.70" fill="#0069D7"/><text transform="translate(102.24,473.60) rotate(-36) scale(0.86,1)" text-anchor="end" font-family="Liberation Sans" font-size="7.3" fill="#5E5E5E">Nov2024</text><rect x="125.76" y="329.80" width="9.00" height="138.40" fill="#2AC4FF"/><rect x="120.16" y="329.80" width="8.60" height="138.40" fill="#0069D7"/><text transform="translate(127.36,473.60) rotate(-36) scale(0.86,1)" text-anchor="end" font-family="Liberation Sans" font-size="7.3" fill="#5E5E5E">Dec2024</text><rect x="150.88" y="330.00" width="9.00" height="138.20" fill="#2AC4FF"/><rect x="145.28" y="328.20" width="8.60" height="140.00" fill="#0069D7"/><text transform="translate(152.48,473.60) rotate(-36) scale(0.86,1)" text-anchor="end" font-family="Liberation Sans" font-size="7.3" fill="#5E5E5E">Jan2025</text><rect x="176.00" y="329.60" width="9.00" height="138.60" fill="#2AC4FF"/><rect x="170.40" y="327.00" width="8.60" height="141.20" fill="#0069D7"/><text transform="translate(177.60,473.60) rotate(-36) scale(0.86,1)" text-anchor="end" font-family="Liberation Sans" font-size="7.3" fill="#5E5E5E">Feb2025</text><rect x="201.12" y="328.60" width="9.00" height="139.60" fill="#2AC4FF"/><rect x="195.52" y="326.80" width="8.60" height="141.40" fill="#0069D7"/><text transform="translate(202.72,473.60) rotate(-36) scale(0.86,1)" text-anchor="end" font-family="Liberation Sans" font-size="7.3" fill="#5E5E5E">Mar2025</text><rect x="226.24" y="330.50" width="9.00" height="137.70" fill="#2AC4FF"/><rect x="220.64" y="330.30" width="8.60" height="137.90" fill="#0069D7"/><text transform="translate(227.84,473.60) rotate(-36) scale(0.86,1)" text-anchor="end" font-family="Liberation Sans" font-size="7.3" fill="#5E5E5E">Apr2025</text><rect x="251.36" y="329.10" width="9.00" height="139.10" fill="#2AC4FF"/><rect x="245.76" y="330.30" width="8.60" height="137.90" fill="#0069D7"/><text transform="translate(252.96,473.60) rotate(-36) scale(0.86,1)" text-anchor="end" font-family="Liberation Sans" font-size="7.3" fill="#5E5E5E">May2025</text><rect x="276.48" y="329.80" width="9.00" height="138.40" fill="#2AC4FF"/><rect x="270.88" y="331.50" width="8.60" height="136.70" fill="#0069D7"/><text transform="translate(278.08,473.60) rotate(-36) scale(0.86,1)" text-anchor="end" font-family="Liberation Sans" font-size="7.3" fill="#5E5E5E">Jun2025</text><rect x="301.60" y="330.50" width="9.00" height="137.70" fill="#2AC4FF"/><rect x="296.00" y="334.10" width="8.60" height="134.10" fill="#0069D7"/><text transform="translate(303.20,473.60) rotate(-36) scale(0.86,1)" text-anchor="end" font-family="Liberation Sans" font-size="7.3" fill="#5E5E5E">Jul2025</text><rect x="326.72" y="327.00" width="9.00" height="141.20" fill="#2AC4FF"/><rect x="321.12" y="332.90" width="8.60" height="135.30" fill="#0069D7"/><text transform="translate(328.32,473.60) rotate(-36) scale(0.86,1)" text-anchor="end" font-family="Liberation Sans" font-size="7.3" fill="#5E5E5E">Aug2025</text><rect x="351.84" y="328.20" width="9.00" height="140.00" fill="#2AC4FF"/><rect x="346.24" y="334.80" width="8.60" height="133.40" fill="#0069D7"/><text transform="translate(353.44,473.60) rotate(-36) scale(0.86,1)" text-anchor="end" font-family="Liberation Sans" font-size="7.3" fill="#5E5E5E">Sep2025</text></svg>
<div class="t" style="right:729.67px;text-align:right;top:339.33px;font-size:7.4px;line-height:7.4px;color:#666;letter-spacing:-0.177px;transform:scaleX(0.9609);transform-origin:100% 0;">$1.5bn</div>
<div class="t" style="right:729.67px;text-align:right;top:381.07px;font-size:7.4px;line-height:7.4px;color:#666;letter-spacing:-0.177px;transform:scaleX(0.9609);transform-origin:100% 0;">$1.0bn</div>
<div class="t" style="right:729.67px;text-align:right;top:422.80px;font-size:7.4px;line-height:7.4px;color:#666;letter-spacing:-0.177px;transform:scaleX(0.9609);transform-origin:100% 0;">$0.5bn</div>
<div class="t" style="right:729.67px;text-align:right;top:464.54px;font-size:7.4px;line-height:7.4px;color:#666;letter-spacing:-0.177px;transform:scaleX(0.9609);transform-origin:100% 0;">$0.0bn</div>
<div class="t" style="left:-101.09px;width:300px;text-align:center;top:317.01px;font-size:7.2px;line-height:7.2px;color:#36A936;font-weight:bold;letter-spacing:-0.402px;transform:scaleX(0.9220);transform-origin:50% 0;">+1.2%</div>
<div class="t" style="left:-75.97px;width:300px;text-align:center;top:317.51px;font-size:7.2px;line-height:7.2px;color:#36A936;font-weight:bold;letter-spacing:-0.402px;transform:scaleX(0.9220);transform-origin:50% 0;">+2.3%</div>
<div class="t" style="left:-50.85px;width:300px;text-align:center;top:316.81px;font-size:7.2px;line-height:7.2px;color:#36A936;font-weight:bold;letter-spacing:-0.402px;transform:scaleX(0.9220);transform-origin:50% 0;">+2.5%</div>
<div class="t" style="left:-25.74px;width:300px;text-align:center;top:319.11px;font-size:7.2px;line-height:7.2px;color:#36A936;font-weight:bold;letter-spacing:-0.427px;transform:scaleX(0.9220);transform-origin:50% 0;">0.0%</div>
<div class="t" style="left:-0.61px;width:300px;text-align:center;top:317.51px;font-size:7.2px;line-height:7.2px;color:#36A936;font-weight:bold;letter-spacing:-0.402px;transform:scaleX(0.9220);transform-origin:50% 0;">+1.1%</div>
<div class="t" style="left:24.51px;width:300px;text-align:center;top:316.31px;font-size:7.2px;line-height:7.2px;color:#36A936;font-weight:bold;letter-spacing:-0.402px;transform:scaleX(0.9220);transform-origin:50% 0;">+1.9%</div>
<div class="t" style="left:49.63px;width:300px;text-align:center;top:316.11px;font-size:7.2px;line-height:7.2px;color:#36A936;font-weight:bold;letter-spacing:-0.402px;transform:scaleX(0.9220);transform-origin:50% 0;">+1.2%</div>
<div class="t" style="left:74.75px;width:300px;text-align:center;top:319.61px;font-size:7.2px;line-height:7.2px;color:#36A936;font-weight:bold;letter-spacing:-0.402px;transform:scaleX(0.9220);transform-origin:50% 0;">+0.2%</div>
<div class="t" style="left:99.89px;width:300px;text-align:center;top:319.61px;font-size:7.2px;line-height:7.2px;color:#E23A4E;font-weight:bold;letter-spacing:-0.367px;transform:scaleX(0.9220);transform-origin:50% 0;">-0.9%</div>
<div class="t" style="left:125.01px;width:300px;text-align:center;top:320.81px;font-size:7.2px;line-height:7.2px;color:#E23A4E;font-weight:bold;letter-spacing:-0.367px;transform:scaleX(0.9220);transform-origin:50% 0;">-1.3%</div>
<div class="t" style="left:150.13px;width:300px;text-align:center;top:323.41px;font-size:7.2px;line-height:7.2px;color:#E23A4E;font-weight:bold;letter-spacing:-0.367px;transform:scaleX(0.9220);transform-origin:50% 0;">-2.5%</div>
<div class="t" style="left:175.25px;width:300px;text-align:center;top:322.21px;font-size:7.2px;line-height:7.2px;color:#E23A4E;font-weight:bold;letter-spacing:-0.367px;transform:scaleX(0.9220);transform-origin:50% 0;">-4.2%</div>
<div class="t" style="left:200.37px;width:300px;text-align:center;top:324.11px;font-size:7.2px;line-height:7.2px;color:#E23A4E;font-weight:bold;letter-spacing:-0.367px;transform:scaleX(0.9220);transform-origin:50% 0;">-4.8%</div>
<div class="t" style="left:386.70px;top:257.03px;font-size:9.3px;line-height:9.3px;color:#252423;letter-spacing:-0.010px;-webkit-text-stroke:0.25px #252423;transform:scaleX(0.9978);transform-origin:0 0;">Loan Balance Current VS Previous Year</div>
<div class="r" style="left:387.20px;top:268.20px;width:62.70px;height:14.50px;background:#CFE2F8;border-radius:2px;"></div>
<div class="t" style="left:268.40px;width:300px;text-align:center;top:272.30px;font-size:7.8px;line-height:7.8px;color:#1F6AD8;letter-spacing:-0.210px;-webkit-text-stroke:0.15px #1F6AD8;transform:scaleX(0.9487);transform-origin:50% 0;">Last 13 months</div>
<div class="r" style="left:456.40px;top:268.20px;width:63.10px;height:14.50px;background:#fff;border:1px solid #E8EBEF;box-sizing:border-box;border-radius:2px;"></div>
<div class="t" style="left:337.96px;width:300px;text-align:center;top:272.30px;font-size:7.8px;line-height:7.8px;color:#252423;letter-spacing:-0.082px;-webkit-text-stroke:0.15px #252423;transform:scaleX(0.9798);transform-origin:50% 0;">History</div>
<div class="t" style="left:612.90px;top:267.34px;font-size:7.4px;line-height:7.4px;color:#252423;letter-spacing:-0.185px;-webkit-text-stroke:0.12px #252423;transform:scaleX(0.9518);transform-origin:0 0;">Select KPI</div>
<div class="r" style="left:611.10px;top:279.30px;width:138.60px;height:15.70px;background:#fff;border:1px solid #E3E6EB;box-sizing:border-box;"></div>
<div class="t" style="left:615.10px;top:284.57px;font-size:7.6px;line-height:7.6px;color:#252423;letter-spacing:-0.243px;-webkit-text-stroke:0.05px #252423;transform:scaleX(0.9426);transform-origin:0 0;">Loan Balance</div>
<svg class="r" style="left:740.00px;top:285.4px" width="8" height="4.6" viewBox="0 0 8 4.6"><path d="M0.4 0.4L4 4.1L7.6 0.4" fill="none" stroke="#555" stroke-width="0.85"/></svg>
<div class="r" style="left:386.80px;top:297.3px;width:5.9px;height:5.9px;border-radius:50%;background:#0069D7"></div>
<div class="t" style="left:394.20px;top:296.31px;font-size:7.2px;line-height:7.2px;color:#666;letter-spacing:-0.093px;transform:scaleX(0.9746);transform-origin:0 0;">Current Year</div>
<div class="r" style="left:435.80px;top:297.3px;width:5.9px;height:5.9px;border-radius:50%;background:#2AC4FF"></div>
<div class="t" style="left:443.00px;top:296.31px;font-size:7.2px;line-height:7.2px;color:#666;letter-spacing:-0.133px;transform:scaleX(0.9641);transform-origin:0 0;">Previous Year</div>
<svg class="r" style="left:0;top:0" width="758" height="501" viewBox="0 0 758 501"><line x1="412.50" y1="358.60" x2="753.00" y2="358.60" stroke="#D0D0D0" stroke-width="0.9" stroke-dasharray="1 2.4"/><line x1="412.50" y1="413.20" x2="753.00" y2="413.20" stroke="#D0D0D0" stroke-width="0.9" stroke-dasharray="1 2.4"/><line x1="412.50" y1="467.80" x2="753.00" y2="467.80" stroke="#D0D0D0" stroke-width="0.9" stroke-dasharray="1 2.4"/><rect x="429.70" y="325.80" width="9.00" height="142.00" fill="#2AC4FF"/><rect x="424.10" y="338.60" width="8.60" height="129.20" fill="#0069D7"/><text transform="translate(431.30,473.20) rotate(-36) scale(0.86,1)" text-anchor="end" font-family="Liberation Sans" font-size="7.3" fill="#5E5E5E">Sep2024</text><rect x="454.89" y="327.00" width="9.00" height="140.80" fill="#2AC4FF"/><rect x="449.29" y="338.20" width="8.60" height="129.60" fill="#0069D7"/><text transform="translate(456.49,473.20) rotate(-36) scale(0.86,1)" text-anchor="end" font-family="Liberation Sans" font-size="7.3" fill="#5E5E5E">Oct2024</text><rect x="480.08" y="327.40" width="9.00" height="140.40" fill="#2AC4FF"/><rect x="474.48" y="337.70" width="8.60" height="130.10" fill="#0069D7"/><text transform="translate(481.68,473.20) rotate(-36) scale(0.86,1)" text-anchor="end" font-family="Liberation Sans" font-size="7.3" fill="#5E5E5E">Nov2024</text><rect x="505.27" y="327.20" width="9.00" height="140.60" fill="#2AC4FF"/><rect x="499.67" y="338.40" width="8.60" height="129.40" fill="#0069D7"/><text transform="translate(506.87,473.20) rotate(-36) scale(0.86,1)" text-anchor="end" font-family="Liberation Sans" font-size="7.3" fill="#5E5E5E">Dec2024</text><rect x="530.46" y="327.90" width="9.00" height="139.90" fill="#2AC4FF"/><rect x="524.86" y="339.30" width="8.60" height="128.50" fill="#0069D7"/><text transform="translate(532.06,473.20) rotate(-36) scale(0.86,1)" text-anchor="end" font-family="Liberation Sans" font-size="7.3" fill="#5E5E5E">Jan2025</text><rect x="555.65" y="331.90" width="9.00" height="135.90" fill="#2AC4FF"/><rect x="550.05" y="340.20" width="8.60" height="127.60" fill="#0069D7"/><text transform="translate(557.25,473.20) rotate(-36) scale(0.86,1)" text-anchor="end" font-family="Liberation Sans" font-size="7.3" fill="#5E5E5E">Feb2025</text><rect x="580.84" y="331.90" width="9.00" height="135.90" fill="#2AC4FF"/><rect x="575.24" y="342.00" width="8.60" height="125.80" fill="#0069D7"/><text transform="translate(582.44,473.20) rotate(-36) scale(0.86,1)" text-anchor="end" font-family="Liberation Sans" font-size="7.3" fill="#5E5E5E">Mar2025</text><rect x="606.03" y="333.00" width="9.00" height="134.80" fill="#2AC4FF"/><rect x="600.43" y="343.70" width="8.60" height="124.10" fill="#0069D7"/><text transform="translate(607.63,473.20) rotate(-36) scale(0.86,1)" text-anchor="end" font-family="Liberation Sans" font-size="7.3" fill="#5E5E5E">Apr2025</text><rect x="631.22" y="333.00" width="9.00" height="134.80" fill="#2AC4FF"/><rect x="625.62" y="345.00" width="8.60" height="122.80" fill="#0069D7"/><text transform="translate(632.82,473.20) rotate(-36) scale(0.86,1)" text-anchor="end" font-family="Liberation Sans" font-size="7.3" fill="#5E5E5E">May2025</text><rect x="656.41" y="333.00" width="9.00" height="134.80" fill="#2AC4FF"/><rect x="650.81" y="347.90" width="8.60" height="119.90" fill="#0069D7"/><text transform="translate(658.01,473.20) rotate(-36) scale(0.86,1)" text-anchor="end" font-family="Liberation Sans" font-size="7.3" fill="#5E5E5E">Jun2025</text><rect x="681.60" y="333.00" width="9.00" height="134.80" fill="#2AC4FF"/><rect x="676.00" y="348.40" width="8.60" height="119.40" fill="#0069D7"/><text transform="translate(683.20,473.20) rotate(-36) scale(0.86,1)" text-anchor="end" font-family="Liberation Sans" font-size="7.3" fill="#5E5E5E">Jul2025</text><rect x="706.79" y="338.20" width="9.00" height="129.60" fill="#2AC4FF"/><rect x="701.19" y="348.30" width="8.60" height="119.50" fill="#0069D7"/><text transform="translate(708.39,473.20) rotate(-36) scale(0.86,1)" text-anchor="end" font-family="Liberation Sans" font-size="7.3" fill="#5E5E5E">Aug2025</text><rect x="731.98" y="338.60" width="9.00" height="129.20" fill="#2AC4FF"/><rect x="726.38" y="349.70" width="8.60" height="118.10" fill="#0069D7"/><text transform="translate(733.58,473.20) rotate(-36) scale(0.86,1)" text-anchor="end" font-family="Liberation Sans" font-size="7.3" fill="#5E5E5E">Sep2025</text></svg>
<div class="t" style="right:350.67px;text-align:right;top:354.94px;font-size:7.4px;line-height:7.4px;color:#666;letter-spacing:-0.177px;transform:scaleX(0.9609);transform-origin:100% 0;">$1.0bn</div>
<div class="t" style="right:350.67px;text-align:right;top:409.54px;font-size:7.4px;line-height:7.4px;color:#666;letter-spacing:-0.177px;transform:scaleX(0.9609);transform-origin:100% 0;">$0.5bn</div>
<div class="t" style="right:350.67px;text-align:right;top:464.14px;font-size:7.4px;line-height:7.4px;color:#666;letter-spacing:-0.177px;transform:scaleX(0.9609);transform-origin:100% 0;">$0.0bn</div>
<div class="t" style="left:278.23px;width:300px;text-align:center;top:327.91px;font-size:7.2px;line-height:7.2px;color:#E23A4E;font-weight:bold;letter-spacing:-0.367px;transform:scaleX(0.9220);transform-origin:50% 0;">-8.9%</div>
<div class="t" style="left:303.42px;width:300px;text-align:center;top:327.51px;font-size:7.2px;line-height:7.2px;color:#E23A4E;font-weight:bold;letter-spacing:-0.367px;transform:scaleX(0.9220);transform-origin:50% 0;">-8.0%</div>
<div class="t" style="left:328.61px;width:300px;text-align:center;top:327.01px;font-size:7.2px;line-height:7.2px;color:#E23A4E;font-weight:bold;letter-spacing:-0.367px;transform:scaleX(0.9220);transform-origin:50% 0;">-7.4%</div>
<div class="t" style="left:353.80px;width:300px;text-align:center;top:327.71px;font-size:7.2px;line-height:7.2px;color:#E23A4E;font-weight:bold;letter-spacing:-0.367px;transform:scaleX(0.9220);transform-origin:50% 0;">-8.0%</div>
<div class="t" style="left:378.99px;width:300px;text-align:center;top:328.61px;font-size:7.2px;line-height:7.2px;color:#E23A4E;font-weight:bold;letter-spacing:-0.367px;transform:scaleX(0.9220);transform-origin:50% 0;">-8.2%</div>
<div class="t" style="left:404.18px;width:300px;text-align:center;top:329.51px;font-size:7.2px;line-height:7.2px;color:#E23A4E;font-weight:bold;letter-spacing:-0.367px;transform:scaleX(0.9220);transform-origin:50% 0;">-6.2%</div>
<div class="t" style="left:429.37px;width:300px;text-align:center;top:331.31px;font-size:7.2px;line-height:7.2px;color:#E23A4E;font-weight:bold;letter-spacing:-0.367px;transform:scaleX(0.9220);transform-origin:50% 0;">-7.5%</div>
<div class="t" style="left:454.56px;width:300px;text-align:center;top:333.01px;font-size:7.2px;line-height:7.2px;color:#E23A4E;font-weight:bold;letter-spacing:-0.367px;transform:scaleX(0.9220);transform-origin:50% 0;">-8.0%</div>
<div class="t" style="left:479.75px;width:300px;text-align:center;top:334.31px;font-size:7.2px;line-height:7.2px;color:#E23A4E;font-weight:bold;letter-spacing:-0.367px;transform:scaleX(0.9220);transform-origin:50% 0;">-8.9%</div>
<div class="t" style="left:504.95px;width:300px;text-align:center;top:337.21px;font-size:7.2px;line-height:7.2px;color:#E23A4E;font-weight:bold;letter-spacing:-0.350px;transform:scaleX(0.9220);transform-origin:50% 0;">-11.2%</div>
<div class="t" style="left:530.14px;width:300px;text-align:center;top:337.71px;font-size:7.2px;line-height:7.2px;color:#E23A4E;font-weight:bold;letter-spacing:-0.350px;transform:scaleX(0.9220);transform-origin:50% 0;">-11.7%</div>
<div class="t" style="left:555.32px;width:300px;text-align:center;top:337.61px;font-size:7.2px;line-height:7.2px;color:#E23A4E;font-weight:bold;letter-spacing:-0.367px;transform:scaleX(0.9220);transform-origin:50% 0;">-8.2%</div>
<div class="t" style="left:580.51px;width:300px;text-align:center;top:339.01px;font-size:7.2px;line-height:7.2px;color:#E23A4E;font-weight:bold;letter-spacing:-0.367px;transform:scaleX(0.9220);transform-origin:50% 0;">-8.7%</div>
</div></body></html>
